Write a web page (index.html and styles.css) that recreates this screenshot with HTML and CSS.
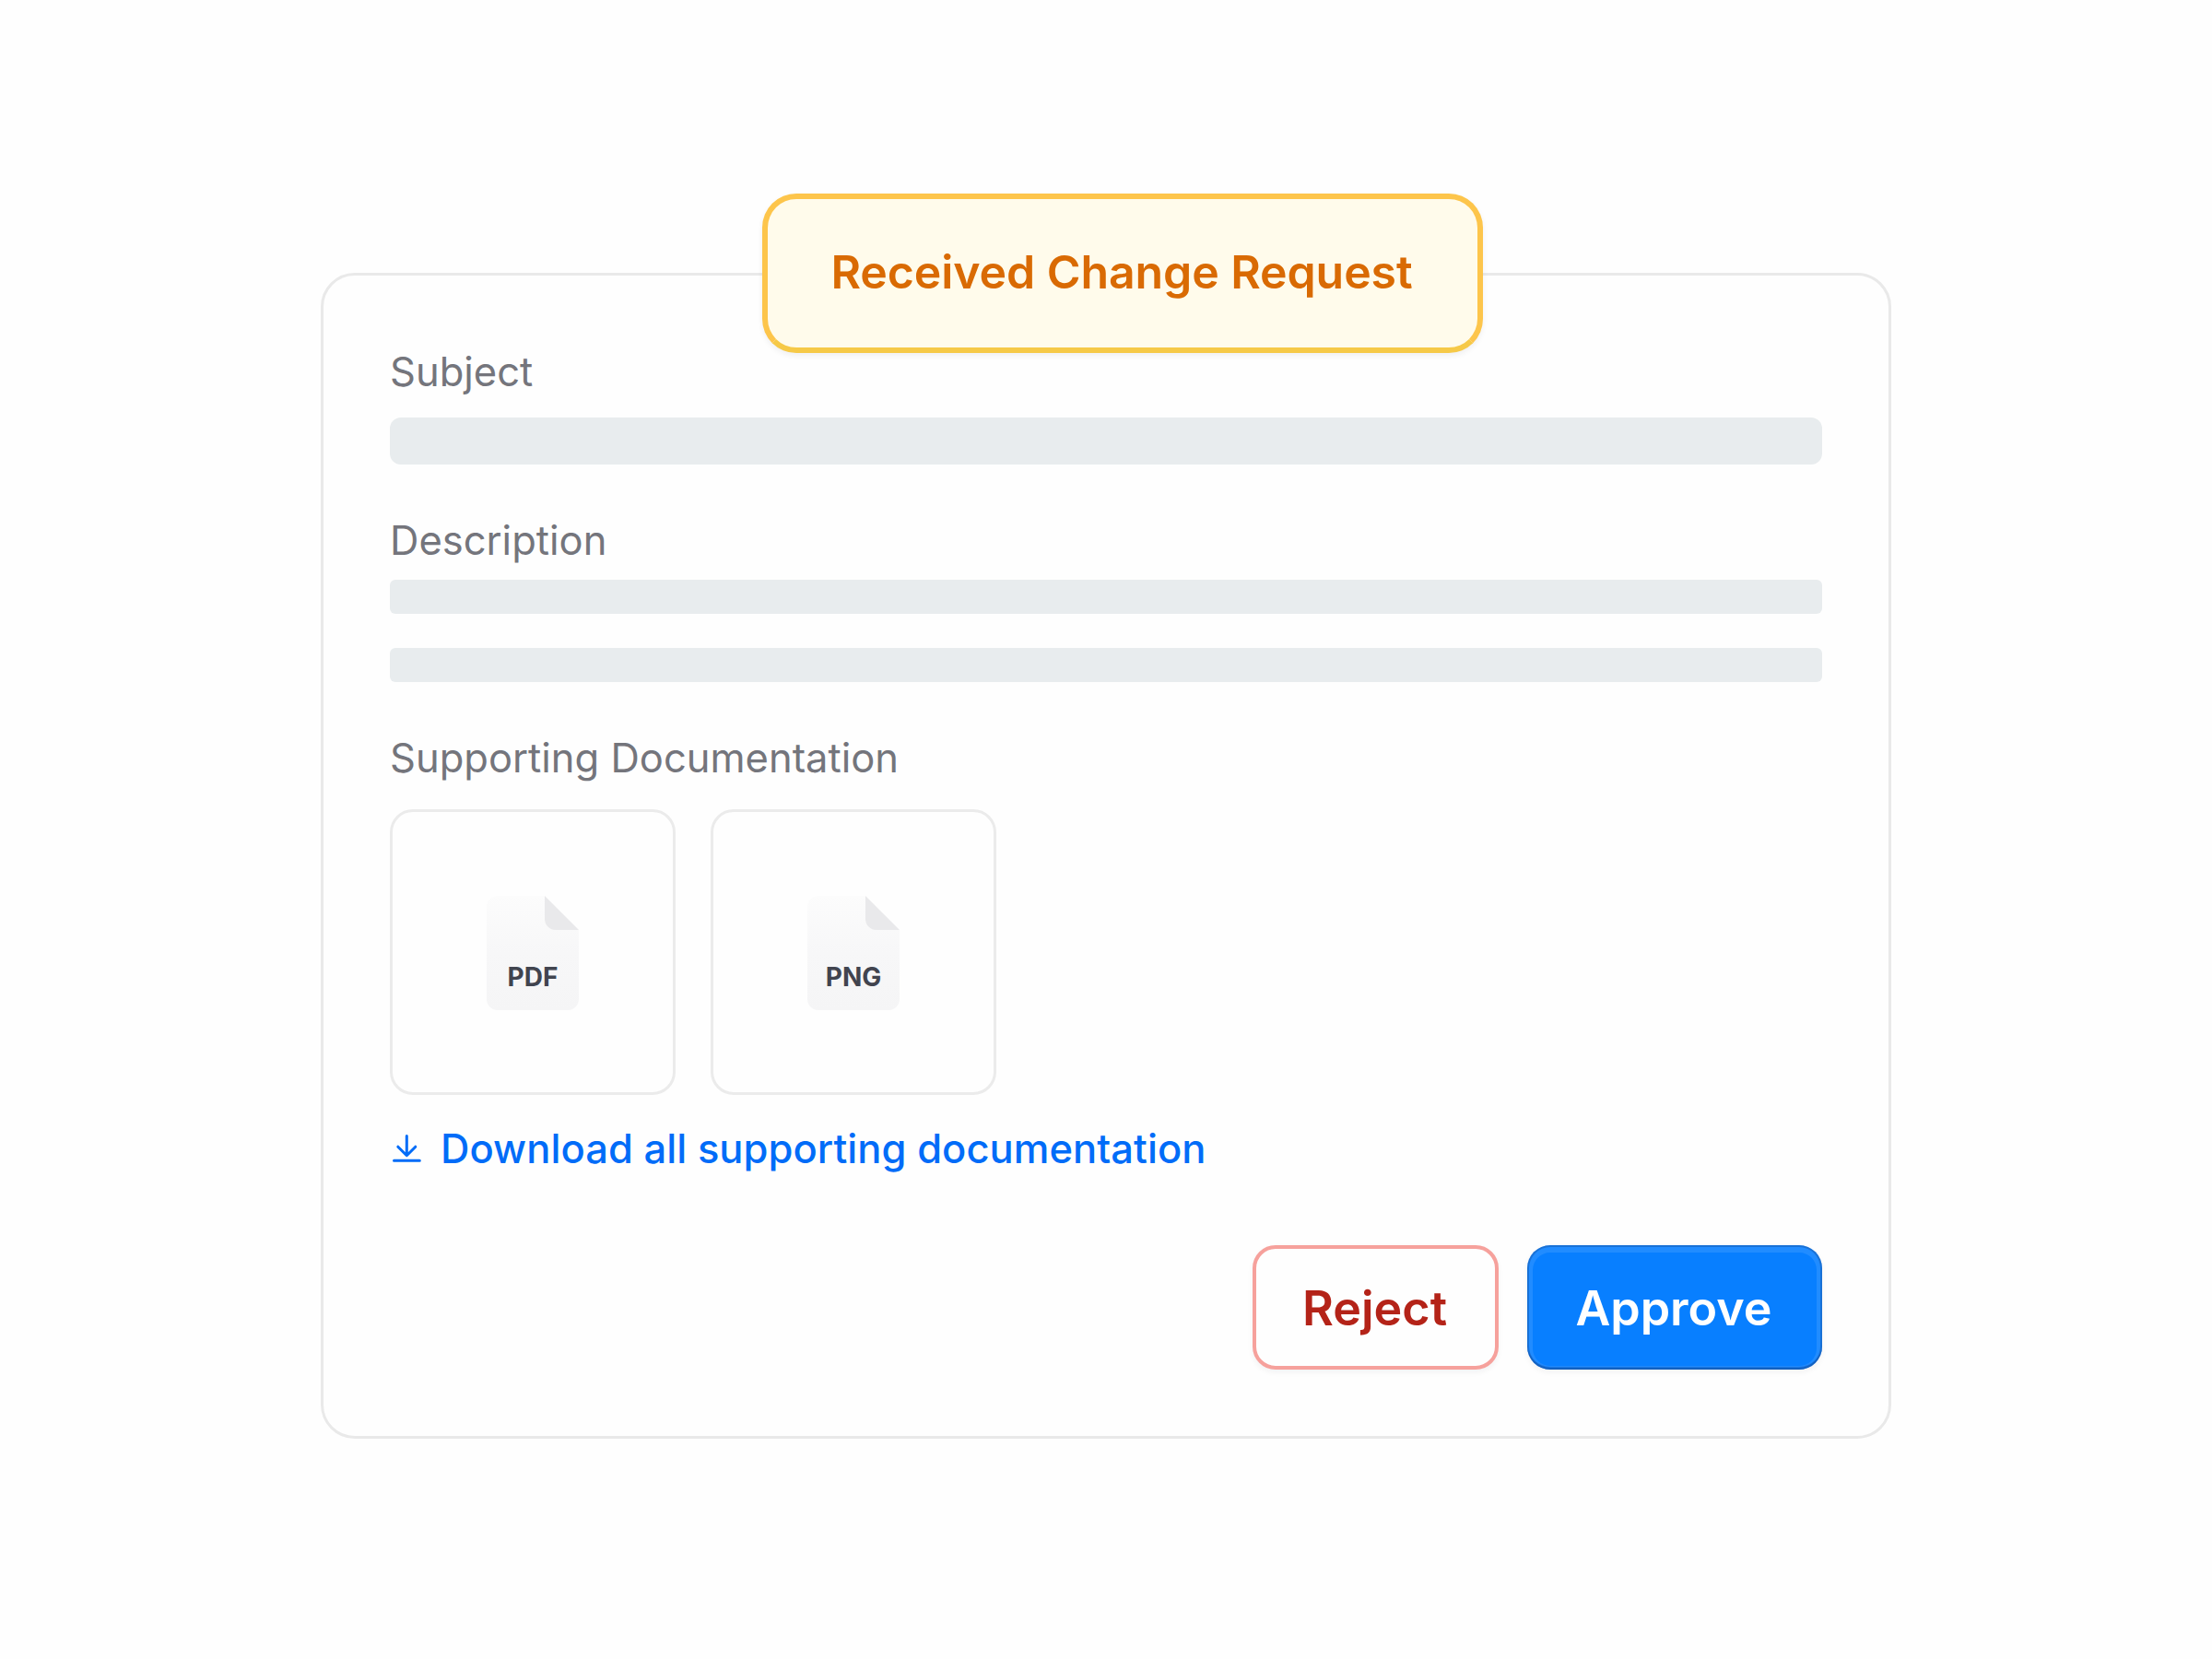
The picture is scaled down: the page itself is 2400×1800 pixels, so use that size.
FILE: index.html
```html
<!DOCTYPE html>
<html lang="en">
<head>
  <meta charset="UTF-8" />
  <title>Received Change Request</title>
  <link rel="stylesheet" href="styles.css">
</head>
<body>

<div class="card">
  <div class="badge">Received Change Request</div>

  <div class="field subject">
    <div class="label">Subject</div>
    <div class="bar bar-large"></div>
  </div>

  <div class="field description">
    <div class="label">Description</div>
    <div class="bar"></div>
    <div class="bar"></div>
  </div>

  <div class="field documents">
    <div class="label">Supporting Documentation</div>
    <div class="files">
      <div class="file">
        <svg class="file-icon" width="100" height="124" viewBox="0 0 100 124">
          <defs>
            <linearGradient id="paper" x1="0" y1="0" x2="0" y2="1">
              <stop offset="0" stop-color="#fcfcfc" />
              <stop offset="0.5" stop-color="#f7f7f8" />
              <stop offset="1" stop-color="#f5f5f6" />
            </linearGradient>
          </defs>
          <path d="M12 0H63L100 37V112a12 12 0 0 1-12 12H12a12 12 0 0 1-12-12V12A12 12 0 0 1 12 0Z" fill="url(#paper)" />
          <path d="M63 0L100 37H75a12 12 0 0 1-12-12Z" fill="#e9e9eb" />
        </svg>
        <span class="file-type">PDF</span>
      </div>
      <div class="file">
        <svg class="file-icon" width="100" height="124" viewBox="0 0 100 124">
          <path d="M12 0H63L100 37V112a12 12 0 0 1-12 12H12a12 12 0 0 1-12-12V12A12 12 0 0 1 12 0Z" fill="url(#paper)" />
          <path d="M63 0L100 37H75a12 12 0 0 1-12-12Z" fill="#e9e9eb" />
        </svg>
        <span class="file-type">PNG</span>
      </div>
    </div>
  </div>

  <a class="download">
    <svg width="37" height="37" viewBox="0 0 37 37" fill="none" stroke="currentColor" stroke-width="3" stroke-linecap="round" stroke-linejoin="round">
      <path d="M18.3 4.5V25.5M8.8 16.2L18.3 25.7L27.8 16.2M4.5 31.3H32.3" />
    </svg>
    <span>Download all supporting documentation</span>
  </a>

  <div class="actions">
    <button class="reject">Reject</button>
    <button class="approve">Approve</button>
  </div>
</div>

</body>
</html>
```
FILE: styles.css
```css
* {
  box-sizing: border-box;
}

body {
  margin: 0;
  padding: 296px 348px 0;
  font-family: Inter, sans-serif;
  background-color: #fefefe;
}

.card {
  position: relative;
  height: 1265px;
  padding: 76px 72px 0 72px;
  border: 3px solid #e9e9e9;
  border-radius: 37px;
}

.badge {
  position: absolute;
  top: -89px;
  left: 476px;
  width: 782px;
  height: 173px;
  padding-right: 2px;
  border: 6px solid #fdc54b;
  border-bottom-color: #f6c947;
  border-radius: 37px;
  background-color: #fffbeb;
  box-shadow: 0 3px 6px rgba(16, 24, 40, 0.06);
  color: #d96a03;
  font-size: 50px;
  font-weight: 600;
  line-height: 158px;
  letter-spacing: -0.1px;
  text-align: center;
}

.label {
  height: 56px;
  color: #74757c;
  font-size: 43.5px;
  line-height: 56px;
}

.bar {
  height: 37px;
  border-radius: 6px;
  background-color: #e8ecee;
}

.bar + .bar {
  margin-top: 37px;
}

.bar-large {
  height: 51px;
  margin-top: 22px;
  border-radius: 12px;
}

.description {
  margin-top: 54px;
}

.description .label {
  margin-bottom: 15px;
}

.documents {
  margin-top: 54px;
}

.files {
  display: flex;
  gap: 38px;
  margin-top: 28px;
}

.file {
  display: grid;
  place-items: center;
  width: 310px;
  height: 310px;
  border: 3px solid #ebebeb;
  border-radius: 25px;
}

.file-icon,
.file-type {
  grid-area: 1 / 1;
}

.file-icon {
  margin-top: 2px;
}

.file-type {
  margin-top: 54px;
  color: #41444f;
  font-size: 28px;
  font-weight: 700;
  line-height: 34px;
}

.download {
  display: flex;
  align-items: center;
  gap: 18px;
  height: 56px;
  margin-top: 30px;
  color: #006cf8;
  font-size: 43.5px;
  font-weight: 500;
  line-height: 56px;
  letter-spacing: 0.05px;
}

.actions {
  display: flex;
  justify-content: flex-end;
  gap: 31px;
  margin-top: 77px;
}

.actions button {
  height: 135px;
  padding: 2px 2px 0 0;
  border: none;
  border-radius: 25px;
  font-family: inherit;
  font-size: 52px;
  font-weight: 600;
}

.actions .reject {
  width: 267px;
  border: 4px solid #f6a19c;
  background-color: #fefefe;
  box-shadow: 0 3px 6px rgba(16, 24, 40, 0.05);
  color: #b42318;
}

.actions .approve {
  width: 320px;
  background-color: #087fff;
  box-shadow:
    inset 0 0 0 2px rgba(10, 60, 130, 0.32),
    inset 0 -3px 1px rgba(0, 60, 150, 0.3),
    inset 0 2px 0 6px rgba(255, 255, 255, 0.1),
    0 3px 6px rgba(16, 24, 40, 0.05);
  color: #fff;
}
```
